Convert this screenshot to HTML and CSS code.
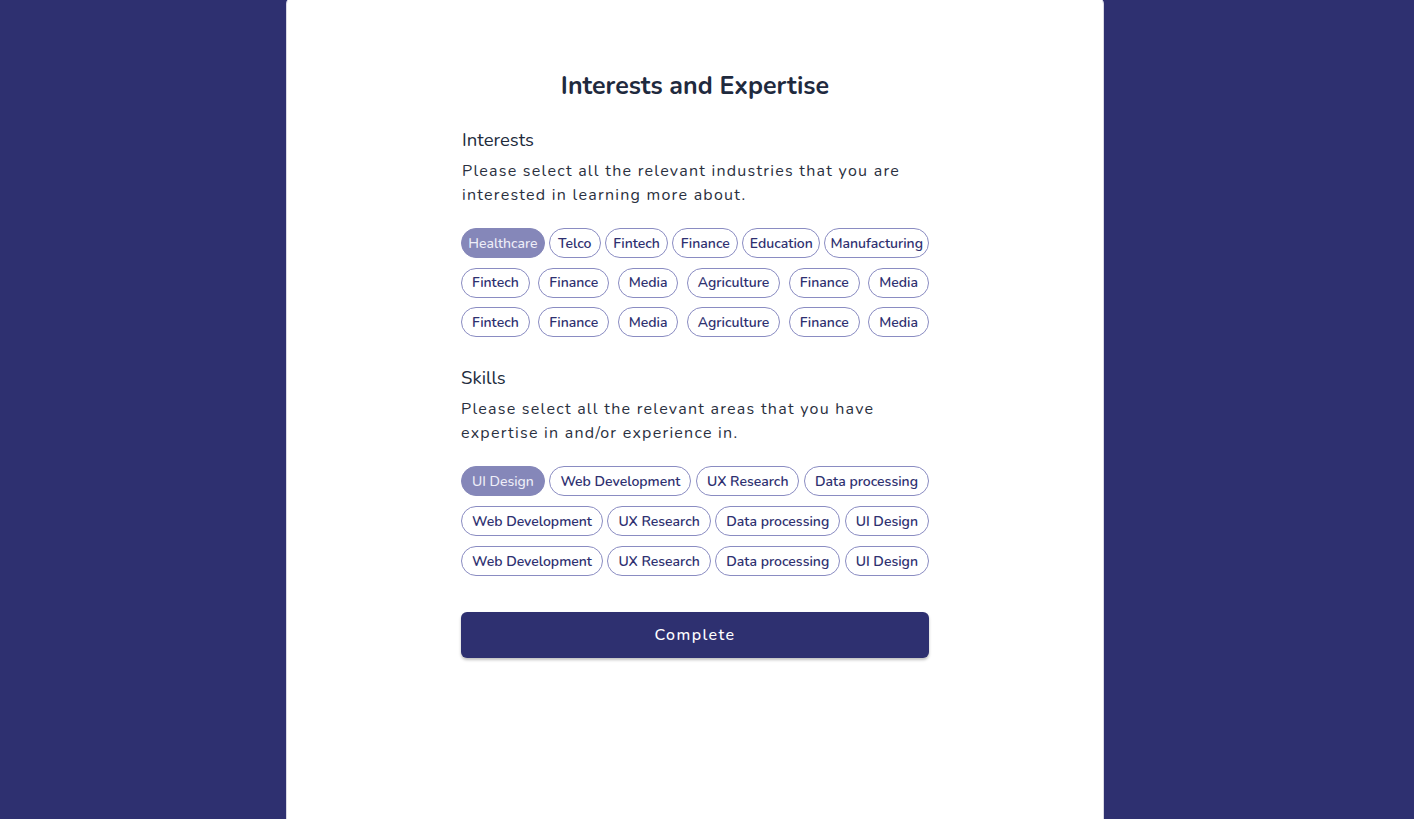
FILE: index.html
```html
<!DOCTYPE html>
<html lang="en">
<head>
<meta charset="utf-8">
<title>Interests and Expertise</title>
<link rel="stylesheet" href="styles.css">
</head>
<body>
<div class="page">
  <main class="card">
    <div class="content">
      <h1 class="title">Interests and Expertise</h1>

      <section class="section">
        <h2 class="section-title">Interests</h2>
        <p class="section-desc">Please select all the relevant industries that you are interested in learning more about.</p>
        <div class="chips">
          <div class="chip-row">
            <span class="chip chip-selected">Healthcare</span>
            <span class="chip">Telco</span>
            <span class="chip">Fintech</span>
            <span class="chip">Finance</span>
            <span class="chip">Education</span>
            <span class="chip">Manufacturing</span>
          </div>
          <div class="chip-row">
            <span class="chip">Fintech</span>
            <span class="chip">Finance</span>
            <span class="chip">Media</span>
            <span class="chip">Agriculture</span>
            <span class="chip">Finance</span>
            <span class="chip">Media</span>
          </div>
          <div class="chip-row">
            <span class="chip">Fintech</span>
            <span class="chip">Finance</span>
            <span class="chip">Media</span>
            <span class="chip">Agriculture</span>
            <span class="chip">Finance</span>
            <span class="chip">Media</span>
          </div>
        </div>
      </section>

      <section class="section section-skills">
        <h2 class="section-title">Skills</h2>
        <p class="section-desc">Please select all the relevant areas that you have expertise in and/or experience in.</p>
        <div class="chips">
          <div class="chip-row">
            <span class="chip chip-selected">UI Design</span>
            <span class="chip">Web Development</span>
            <span class="chip">UX Research</span>
            <span class="chip">Data processing</span>
          </div>
          <div class="chip-row">
            <span class="chip">Web Development</span>
            <span class="chip">UX Research</span>
            <span class="chip">Data processing</span>
            <span class="chip">UI Design</span>
          </div>
          <div class="chip-row">
            <span class="chip">Web Development</span>
            <span class="chip">UX Research</span>
            <span class="chip">Data processing</span>
            <span class="chip">UI Design</span>
          </div>
        </div>
      </section>

      <button class="complete-btn" type="button">Complete</button>
    </div>
  </main>
</div>
</body>
</html>
```

FILE: styles.css
```css
* {
  box-sizing: border-box;
}

html, body {
  margin: 0;
  padding: 0;
  height: 100%;
}

body {
  background: #2e3070;
  font-family: "Nunito", "Lato", "Noto Sans", sans-serif;
  overflow: hidden;
}

.page {
  display: flex;
  justify-content: center;
  padding-right: 24px;
  min-height: 100%;
}

.card {
  width: 818px;
  margin-top: -4px;
  min-height: 860px;
  background: #ffffff;
  border-radius: 8px;
  border: 1px solid #d8d8e4;
  display: flex;
  justify-content: center;
  padding-top: 73px;
}

.content {
  width: 468px;
  display: flex;
  flex-direction: column;
}

.title {
  margin: 0;
  font-size: 25px;
  line-height: 32px;
  font-weight: 700;
  color: #1f2a3e;
  text-align: center;
}

.section {
  margin-top: 26px;
  padding-left: 1px;
}

.section-skills {
  margin-top: 29px;
  padding-left: 0;
}

.section-title {
  margin: 0;
  font-size: 18.5px;
  line-height: 24px;
  font-weight: 400;
  color: #222b3c;
}

.section-desc {
  margin: 7px 0 0;
  font-size: 16px;
  line-height: 24px;
  letter-spacing: 1.25px;
  color: #2a3040;
}

.chips {
  margin-top: 21px;
  margin-left: -1px;
  display: flex;
  flex-direction: column;
  gap: 9.5px;
}

.section-skills .chips {
  margin-top: 21px;
  margin-left: 0;
  gap: 10px;
}

.chip-row {
  display: flex;
  justify-content: space-between;
  gap: 4px;
}

.chip {
  flex: 0 1 auto;
  min-width: 0;
  height: 30px;
  padding: 0 10px;
  display: flex;
  align-items: center;
  justify-content: center;
  white-space: nowrap;
  border: 1px solid #8a8cc2;
  border-radius: 15px;
  font-size: 14px;
  font-weight: 600;
  color: #2e3070;
  background: #ffffff;
}

.chip-selected {
  background: #8587b9;
  border-color: #8587b9;
  color: #eeeef8;
  font-weight: 500;
}

.complete-btn {
  margin-top: 36px;
  height: 46px;
  width: 100%;
  border: none;
  border-radius: 6px;
  background: #2e3070;
  color: #ffffff;
  font-family: inherit;
  font-size: 16px;
  font-weight: 500;
  letter-spacing: 1.4px;
  box-shadow: 0 2px 3px rgba(0, 0, 0, 0.25);
  cursor: pointer;
}
```
